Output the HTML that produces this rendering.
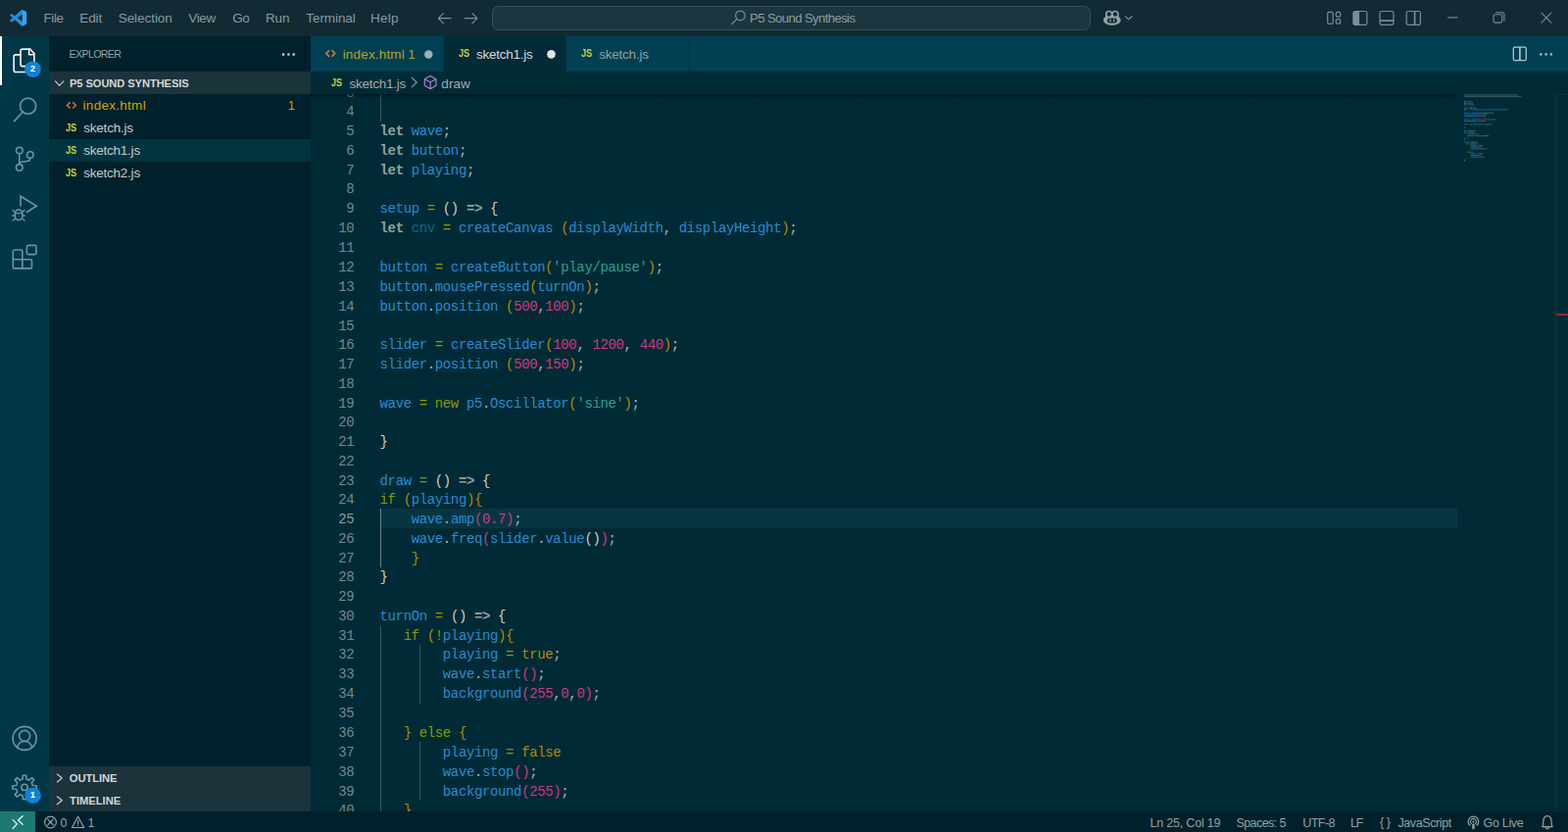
<!DOCTYPE html>
<html lang="en">
<head>
<meta charset="utf-8">
<title>sketch1.js - P5 Sound Synthesis - Visual Studio Code</title>
<style>
html,body{margin:0;padding:0;width:1600px;height:849px;overflow:hidden;background:#002b36;}
body{position:relative;font-family:"Liberation Sans", sans-serif;font-size:13.54px;}
.t{position:absolute;white-space:pre;line-height:20.0px;height:20.0px;}
.ov{position:absolute;left:0;top:0;overflow:visible;pointer-events:none;}
#titlebar{position:absolute;left:0;top:0;width:1600px;height:36.6px;background:#122a34;}
#cmd{position:absolute;left:502.2px;top:5.9px;width:610.8px;height:24.9px;box-sizing:border-box;border:1px solid #34505a;border-radius:6.5px;background:#1c353e;}
#activity{position:absolute;left:0;top:36.6px;width:50px;height:791.1px;background:#003847;}
#activity .sel{position:absolute;left:0;top:0;width:2.1px;height:50px;background:#fff;}
#sidebar{position:absolute;left:50px;top:36.6px;width:267.3px;height:791.1px;background:#00212b;}
.sech{position:absolute;left:0;width:267.3px;height:22.6px;background:#1b343c;}
.row{position:absolute;left:0;width:267.3px;height:22.95px;}
.row.on{background:#003441;}
#editor{position:absolute;left:317.3px;top:36.6px;width:1282.7px;height:791.1px;background:#002b36;}
#tabs{position:absolute;left:0;top:0;width:1282.7px;height:36.5px;background:#004052;}
.tab{position:absolute;top:0;height:36.5px;box-sizing:border-box;border-right:1px solid #003847;background:#004052;}
.tab.on{background:#002b37;}
#crumbs{position:absolute;left:0;top:36.5px;width:1282.7px;height:22.9px;background:#002b36;}
#code{position:absolute;left:0;top:59.4px;width:1282.7px;height:731.7px;overflow:hidden;background:#002b36;font-family:"Liberation Mono", monospace;font-size:14.0px;}
#code .shadow{position:absolute;left:0;top:0;width:1169.7px;height:5px;background:linear-gradient(rgba(0,0,0,.5),rgba(0,0,0,.16) 55%,rgba(0,0,0,0));}
.ln{position:absolute;left:0;width:43.9px;text-align:right;height:20px;line-height:20px;color:#74898f;white-space:pre;letter-spacing:-0.3714px;}
.ln.act{color:#8e9a9d;}
.cl{position:absolute;left:70.30px;height:20px;line-height:20px;white-space:pre;color:#aab6b8;letter-spacing:-0.3714px;}
.hl{position:absolute;left:70.7px;width:1099.1px;background:#073642;}
.ig{position:absolute;width:1px;background:#355760;}
.ig.iga{background:#5f8389;}
.mm{position:absolute;left:1169.7px;top:0;}
.ruler{position:absolute;left:1270.2px;top:0;width:12.5px;height:731.7px;border-left:1px solid #0a3642;border-top:1px solid #0a3642;box-sizing:border-box;}
.mark{position:absolute;left:1270.3px;width:12.4px;height:2.2px;background:#8e2a31;}
#status{position:absolute;left:0;top:827.7px;width:1600px;height:21.3px;background:#00212b;}
#remote{position:absolute;left:0;top:0;width:36.1px;height:21.3px;background:#1e7975;}
.k{color:#93a1a1;font-weight:bold;}
.v{color:#268bd2;}
.o{color:#859900;}
.s{color:#2aa198;}
.n{color:#d33682;}
.c{color:#b58900;}
.b1{color:#cdcdcd;}
.b2{color:#b58900;}
.b3{color:#d33682;}
.p{color:#aab6b8;}
.d{color:#1a6485;}
</style>
</head>
<body>
<header id="titlebar">
<div id="cmd"></div>
<svg class="ov" width="1600" height="36.6" viewBox="0 0 1600 36.6">
<g transform="translate(10.0 10.0) scale(0.1690 0.1660)"><path fill-rule="evenodd" d="M70.9119 99.3171C72.4869 99.9307 74.2828 99.8914 75.8725 99.1264L96.4608 89.2197C98.6242 88.1787 100 85.9892 100 83.5872V16.4133C100 14.0113 98.6243 11.8218 96.4609 10.7808L75.8725 0.873756C73.7862 -0.130129 71.3446 0.11576 69.5135 1.44695C69.252 1.63711 69.0028 1.84943 68.769 2.08341L29.3551 38.0415L12.1872 25.0096C10.589 23.7965 8.35363 23.8959 6.86933 25.2461L1.36303 30.2549C-0.452552 31.9064 -0.454633 34.7627 1.35853 36.417L16.2471 50.0001L1.35853 63.5832C-0.454633 65.2374 -0.452552 68.0938 1.36303 69.7453L6.86933 74.7541C8.35363 76.1043 10.589 76.2037 12.1872 74.9905L29.3551 61.9587L68.769 97.9167C69.3925 98.5406 70.1246 99.0104 70.9119 99.3171ZM75.0152 27.2989L45.1091 50.0001L75.0152 72.7012V27.2989Z" fill="#2090dc"/><path d="M75.9 0.9L96.5 10.8C98.6 11.8 100 14 100 16.4V83.6C100 86 98.6 88.2 96.5 89.2L75.9 99.1C74.3 99.9 72.5 99.9 70.9 99.3C73 99.6 75 98 75 95.6V4.4C75 2 73 0.4 70.9 0.7C72.5 0.1 74.3 0.1 75.9 0.9Z" fill="#2ca9f4"/></g>
<path d="M460.0 18.7H447.3M452.4 13.6L447.3 18.7L452.4 23.8" fill="none" stroke="#7b8e95" stroke-width="1.15" stroke-linecap="round" stroke-linejoin="round"/>
<path d="M474.2 18.7H486.9M481.8 13.6L486.9 18.7L481.8 23.8" fill="none" stroke="#7b8e95" stroke-width="1.15" stroke-linecap="round" stroke-linejoin="round"/>
<circle cx="755.4" cy="15.9" r="4.8" fill="none" stroke="#7b8e95" stroke-width="1.15"/><path d="M752.0 19.3L746.6 24.6" fill="none" stroke="#7b8e95" stroke-width="1.15" stroke-linecap="round" stroke-linejoin="round"/>
<path d="M1128.0 17.2C1126.8 17.9 1126.1 18.9 1126.1 20.1V21.5C1126.1 22.1 1126.4 22.6 1126.9 22.95C1129.0 24.75 1131.8 25.85 1134.85 25.85S1140.7 24.75 1142.8 22.95C1143.3 22.6 1143.6 22.1 1143.6 21.5V20.1C1143.6 18.9 1142.9 17.9 1141.7 17.2L1141 15.4H1128.7Z" fill="#93a3a8"/>
<rect x="1129.9" y="18.5" width="9.9" height="5.1" rx="2.3" fill="#122a34"/>
<circle cx="1131.7" cy="14.6" r="3.0" fill="#122a34" stroke="#93a3a8" stroke-width="1.55"/><circle cx="1138.0" cy="14.6" r="3.0" fill="#122a34" stroke="#93a3a8" stroke-width="1.55"/>
<rect x="1132.35" y="19.3" width="1.3" height="3.1" rx="0.6" fill="#93a3a8"/><rect x="1136.05" y="19.3" width="1.3" height="3.1" rx="0.6" fill="#93a3a8"/>
<path d="M1148.2 16.6L1151.75 19.7L1155.3 16.6" fill="none" stroke="#7b8e95" stroke-width="1.15" stroke-linecap="round" stroke-linejoin="round"/>
<rect x="1354.8" y="12.3" width="5.50" height="12.10" rx="1.5" fill="none" stroke="#7b8e95" stroke-width="1.2"/><rect x="1363.4" y="12.4" width="4.40" height="4.70" rx="1.4" fill="none" stroke="#7b8e95" stroke-width="1.2"/><rect x="1363.4" y="19.6" width="4.40" height="4.60" rx="1.4" fill="none" stroke="#7b8e95" stroke-width="1.2"/>
<rect x="1381.0" y="11.5" width="14.00" height="13.80" rx="2.0" fill="none" stroke="#7b8e95" stroke-width="1.2"/><path d="M1383 11.5H1387.2V25.3H1383C1381.9 25.3 1381 24.4 1381 23.3V13.5C1381 12.4 1381.9 11.5 1383 11.5Z" fill="#7b8e95"/>
<rect x="1408.1" y="11.5" width="14.00" height="13.80" rx="2.0" fill="none" stroke="#7b8e95" stroke-width="1.2"/><path d="M1408.1 21.1H1422.1" fill="none" stroke="#7b8e95" stroke-width="1.7" stroke-linecap="butt" stroke-linejoin="round"/>
<rect x="1435.3" y="11.5" width="14.20" height="13.80" rx="2.0" fill="none" stroke="#7b8e95" stroke-width="1.2"/><path d="M1443.7 11.5V25.3" fill="none" stroke="#7b8e95" stroke-width="1.7" stroke-linecap="butt" stroke-linejoin="round"/>
<rect x="1477.3" y="17.35" width="10.6" height="1.1" fill="#7b8e95"/>
<rect x="1524.1" y="14.7" width="8.80" height="8.40" rx="1.8" fill="none" stroke="#7b8e95" stroke-width="1.1"/><path d="M1526.6 12.7H1533.0C1534.2 12.7 1535.0 13.5 1535.0 14.7V20.9" fill="none" stroke="#7b8e95" stroke-width="1.1" stroke-linecap="round" stroke-linejoin="round"/>
<path d="M1573.1 13.1L1582.9 23.2M1582.9 13.1L1573.1 23.2" fill="none" stroke="#7b8e95" stroke-width="1.05" stroke-linecap="round" stroke-linejoin="round"/>
</svg>
<span class="t" style="left:44.50px;top:9.00px;font-size:13.54px;color:#869a9f;letter-spacing:-0.438px;">File</span>
<span class="t" style="left:81.30px;top:9.00px;font-size:13.54px;color:#869a9f;letter-spacing:-0.119px;">Edit</span>
<span class="t" style="left:120.70px;top:9.00px;font-size:13.54px;color:#869a9f;letter-spacing:-0.063px;">Selection</span>
<span class="t" style="left:192.22px;top:9.00px;font-size:13.54px;color:#869a9f;letter-spacing:-0.339px;">View</span>
<span class="t" style="left:237.24px;top:9.00px;font-size:13.54px;color:#869a9f;letter-spacing:-0.588px;">Go</span>
<span class="t" style="left:271.00px;top:9.00px;font-size:13.54px;color:#869a9f;letter-spacing:-0.150px;">Run</span>
<span class="t" style="left:312.32px;top:9.00px;font-size:13.54px;color:#869a9f;letter-spacing:-0.100px;">Terminal</span>
<span class="t" style="left:378.00px;top:9.00px;font-size:13.54px;color:#869a9f;letter-spacing:0.249px;">Help</span>
<span class="t" style="left:765.10px;top:9.00px;font-size:13.2px;color:#8b9ca1;letter-spacing:-0.640px;">P5 Sound Synthesis</span>
</header>
<nav id="activity">
<div class="sel"></div>
<svg class="ov" width="50" height="791.1" viewBox="0 36.6 50 791.1">
<path d="M23.0 49.7H30.7L34.9 54.2V65.2C34.9 66.3 34.0 67.2 32.9 67.2H23.0C21.9 67.2 21.0 66.3 21.0 65.2V51.7C21.0 50.6 21.9 49.7 23.0 49.7Z" fill="none" stroke="#f4f6f6" stroke-width="1.6" stroke-linecap="round" stroke-linejoin="round"/>
<path d="M29.6 50.0V55.4H34.6" fill="none" stroke="#f4f6f6" stroke-width="1.6" stroke-linecap="round" stroke-linejoin="round"/>
<path d="M20.8 55.5H16.1C15.0 55.5 14.1 56.4 14.1 57.5V71.1C14.1 72.2 15.0 73.1 16.1 73.1H26.5C27.6 73.1 28.3 72.4 28.3 71.3V67.6" fill="none" stroke="#f4f6f6" stroke-width="1.6" stroke-linecap="round" stroke-linejoin="round"/>
<circle cx="33.5" cy="70.3" r="8.3" fill="#0f82d6"/>
<circle cx="28.6" cy="107.8" r="8.1" fill="none" stroke="#6996a3" stroke-width="1.6"/><path d="M23.1 113.8L14.6 123.2" fill="none" stroke="#6996a3" stroke-width="1.6" stroke-linecap="round" stroke-linejoin="round"/>
<circle cx="19.8" cy="153.1" r="3.3" fill="none" stroke="#6996a3" stroke-width="1.6"/><circle cx="19.8" cy="170.5" r="3.3" fill="none" stroke="#6996a3" stroke-width="1.6"/><circle cx="30.8" cy="157.6" r="3.3" fill="none" stroke="#6996a3" stroke-width="1.6"/>
<path d="M19.8 156.4V167.2" fill="none" stroke="#6996a3" stroke-width="1.6" stroke-linecap="round" stroke-linejoin="round"/><path d="M30.8 160.9C30.8 163.4 29.0 164.4 26.0 164.4C23.0 164.4 19.8 164.6 19.8 167.2" fill="none" stroke="#6996a3" stroke-width="1.6" stroke-linecap="round" stroke-linejoin="round"/>
<path d="M21.0 210.2V199.9L37.3 209.9L26.9 216.4" fill="none" stroke="#6996a3" stroke-width="1.6" stroke-linecap="butt" stroke-linejoin="miter"/>
<ellipse cx="19.1" cy="218.8" rx="3.9" ry="5.3" fill="none" stroke="#6996a3" stroke-width="1.6"/>
<path d="M15.4 217.2H22.8M12.9 219.6H15.2M23.0 219.6H25.3M13.2 214.2L15.6 215.8M25.0 214.2L22.6 215.8M13.2 224.6L15.8 222.6M25.0 224.6L22.4 222.6" fill="none" stroke="#6996a3" stroke-width="1.35" stroke-linecap="round" stroke-linejoin="round"/>
<path d="M14.8 254.6H21.3C22.1 254.6 22.8 255.3 22.8 256.1V264.4H31.0C31.8 264.4 32.5 265.1 32.5 265.9V272.0C32.5 272.8 31.8 273.5 31.0 273.5H14.8C14.0 273.5 13.3 272.8 13.3 272.0V256.1C13.3 255.3 14.0 254.6 14.8 254.6Z" fill="none" stroke="#6996a3" stroke-width="1.6" stroke-linecap="round" stroke-linejoin="round"/>
<path d="M13.3 264.4H22.8V273.5" fill="none" stroke="#6996a3" stroke-width="1.6" stroke-linecap="round" stroke-linejoin="round"/>
<rect x="27.4" y="250.0" width="9.60" height="9.20" rx="1.6" fill="none" stroke="#6996a3" stroke-width="1.6"/>
<circle cx="25.1" cy="753.0" r="12.0" fill="none" stroke="#6996a3" stroke-width="1.6"/><circle cx="25.1" cy="750.5" r="5.5" fill="none" stroke="#6996a3" stroke-width="1.6"/>
<path d="M17.4 762.0C18.6 758.4 21.4 756.1 25.1 756.1S31.6 758.4 32.8 762.0" fill="none" stroke="#6996a3" stroke-width="1.6" stroke-linecap="round" stroke-linejoin="round"/>
<path d="M23.12 794.61L23.41 790.80L26.59 790.80L26.88 794.61L29.61 795.74L32.50 793.25L34.75 795.50L32.26 798.39L33.39 801.12L37.20 801.41L37.20 804.59L33.39 804.88L32.26 807.61L34.75 810.50L32.50 812.75L29.61 810.26L26.88 811.39L26.59 815.20L23.41 815.20L23.12 811.39L20.39 810.26L17.50 812.75L15.25 810.50L17.74 807.61L16.61 804.88L12.80 804.59L12.80 801.41L16.61 801.12L17.74 798.39L15.25 795.50L17.50 793.25L20.39 795.74Z" fill="none" stroke="#6996a3" stroke-width="1.6" stroke-linecap="round" stroke-linejoin="round"/><circle cx="25.0" cy="803.0" r="3.1" fill="none" stroke="#6996a3" stroke-width="1.6"/>
<circle cx="33.5" cy="811.3" r="8.3" fill="#0f82d6"/>
</svg>
<span class="t" style="left:30.79px;top:23.40px;font-size:9.4px;color:#ffffff;font-weight:bold;">2</span>
<span class="t" style="left:30.70px;top:764.40px;font-size:9.4px;color:#ffffff;font-weight:bold;">1</span>
</nav>
<aside id="sidebar">
<div class="sech" style="top:36.8px"></div>
<div class="row on" style="top:105.3px"></div>
<div class="sech" style="top:745.5px;height:22.8px"></div>
<div class="sech" style="top:768.3px;height:22.8px"></div>
<svg class="ov" width="267.3" height="791.1" viewBox="50 36.6 267.3 791.1">
<rect x="288.00" y="53.95" width="2.3" height="2.3" rx="0.5" fill="#c5cccc"/><rect x="293.25" y="53.95" width="2.3" height="2.3" rx="0.5" fill="#c5cccc"/><rect x="298.50" y="53.95" width="2.3" height="2.3" rx="0.5" fill="#c5cccc"/>
<path d="M56.5 82.4L60.70 87.0L64.9 82.4" fill="none" stroke="#c5cccc" stroke-width="1.15" stroke-linecap="round" stroke-linejoin="round"/>
<path d="M58.3 789.6L63.3 793.60L58.3 797.6" fill="none" stroke="#c5cccc" stroke-width="1.15" stroke-linecap="round" stroke-linejoin="round"/>
<path d="M58.3 812.4L63.3 816.40L58.3 820.4" fill="none" stroke="#c5cccc" stroke-width="1.15" stroke-linecap="round" stroke-linejoin="round"/>
<path d="M71.60 104.00L68.40 107.05L71.60 110.10M74.20 104.00L77.40 107.05L74.20 110.10" fill="none" stroke="#d26f38" stroke-width="1.55" stroke-linecap="butt" stroke-linejoin="miter"/>
</svg>
<span class="t" style="left:20.60px;top:8.40px;font-size:10.7px;color:#93a1a1;letter-spacing:-0.697px;">EXPLORER</span>
<span class="t" style="left:21.00px;top:38.40px;font-size:11.2px;color:#d3d7d7;letter-spacing:-0.114px;font-weight:bold;">P5 SOUND SYNTHESIS</span>
<span class="t" style="left:34.60px;top:61.40px;font-size:13.54px;color:#cca700;letter-spacing:0.267px;">index.html</span>
<span class="t" style="left:244.05px;top:61.40px;font-size:12.2px;color:#cca700;">1</span>
<span class="t" style="left:35.15px;top:84.40px;font-size:13.54px;color:#c4cccc;letter-spacing:-0.206px;">sketch.js</span>
<span class="t" style="left:35.15px;top:107.40px;font-size:13.54px;color:#c4cccc;letter-spacing:-0.239px;">sketch1.js</span>
<span class="t" style="left:35.15px;top:130.40px;font-size:13.54px;color:#c4cccc;letter-spacing:-0.239px;">sketch2.js</span>
<span class="t" style="left:20.81px;top:747.40px;font-size:11.2px;color:#d3d7d7;letter-spacing:-0.069px;font-weight:bold;">OUTLINE</span>
<span class="t" style="left:21.10px;top:770.40px;font-size:11.2px;color:#d3d7d7;letter-spacing:-0.014px;font-weight:bold;">TIMELINE</span>
<span class="t" style="left:17.35px;top:84.40px;font-size:10.1px;color:#cbcb41;transform:scaleX(0.904);transform-origin:0 0;font-weight:bold;">JS</span>
<span class="t" style="left:17.35px;top:107.40px;font-size:10.1px;color:#cbcb41;transform:scaleX(0.904);transform-origin:0 0;font-weight:bold;">JS</span>
<span class="t" style="left:17.35px;top:130.40px;font-size:10.1px;color:#cbcb41;transform:scaleX(0.904);transform-origin:0 0;font-weight:bold;">JS</span>
</aside>
<main id="editor">
<div id="tabs">
<div class="tab" style="left:0;width:135.5px"></div><div class="tab on" style="left:135.5px;width:124.8px"></div><div class="tab" style="left:260.3px;width:125.3px"></div>
<svg class="ov" width="1282.7" height="36.5" viewBox="317.3 36.6 1282.7 36.5">
<path d="M336.30 50.80L333.20 54.15L336.30 57.50M338.90 50.80L342.00 54.15L338.90 57.50" fill="none" stroke="#cf7a48" stroke-width="1.55" stroke-linecap="butt" stroke-linejoin="miter"/>
<circle cx="437.6" cy="55.0" r="4.25" fill="#9fb0b3"/><circle cx="562.8" cy="55.0" r="4.3" fill="#dfe6e8"/>
<rect x="1544.6" y="47.8" width="13.00" height="13.50" rx="1.6" fill="none" stroke="#b4c8ce" stroke-width="1.25"/><path d="M1551.2 47.8V61.3" fill="none" stroke="#b4c8ce" stroke-width="1.6" stroke-linecap="butt" stroke-linejoin="round"/>
<rect x="1571.50" y="53.80" width="2.3" height="2.3" rx="0.5" fill="#b4c8ce"/><rect x="1576.75" y="53.80" width="2.3" height="2.3" rx="0.5" fill="#b4c8ce"/><rect x="1582.00" y="53.80" width="2.3" height="2.3" rx="0.5" fill="#b4c8ce"/>
</svg>
<span class="t" style="left:32.40px;top:9.40px;font-size:13.54px;color:#b3a22b;letter-spacing:0.156px;">index.html</span>
<span class="t" style="left:98.95px;top:9.40px;font-size:13.54px;color:#b3a22b;">1</span>
<span class="t" style="left:168.75px;top:9.40px;font-size:13.54px;color:#d6dbdb;letter-spacing:-0.283px;">sketch1.js</span>
<span class="t" style="left:293.95px;top:9.40px;font-size:13.54px;color:#93a1a1;letter-spacing:-0.244px;">sketch.js</span>
<span class="t" style="left:150.75px;top:8.40px;font-size:10.1px;color:#cbcb41;transform:scaleX(0.904);transform-origin:0 0;font-weight:bold;">JS</span>
<span class="t" style="left:275.55px;top:8.40px;font-size:10.1px;color:#cbcb41;transform:scaleX(0.904);transform-origin:0 0;font-weight:bold;">JS</span>
</div>
<div id="crumbs">
<svg class="ov" width="1282.7" height="22.9" viewBox="317.3 73.1 1282.7 22.9">
<path d="M420.4 79.5L425.3 84.10L420.4 88.7" fill="none" stroke="#8d9da1" stroke-width="1.15" stroke-linecap="round" stroke-linejoin="round"/>
<path d="M439.2 77.5L445.1 80.8V87.4L439.2 90.8L433.4 87.4V80.8ZM433.6 81.0L439.2 83.9L444.9 81.0M439.2 83.9V90.6" fill="none" stroke="#b180d7" stroke-width="1.15" stroke-linecap="round" stroke-linejoin="round"/>
</svg>
<span class="t" style="left:39.15px;top:2.90px;font-size:13.54px;color:#a3acae;letter-spacing:-0.261px;">sketch1.js</span>
<span class="t" style="left:133.00px;top:2.90px;font-size:13.54px;color:#a3acae;letter-spacing:0.082px;">draw</span>
<span class="t" style="left:21.15px;top:1.90px;font-size:10.1px;color:#cbcb41;transform:scaleX(0.888);transform-origin:0 0;font-weight:bold;">JS</span>
</div>
<div id="code">
<div class="hl" style="top:423.42px;height:20.00px"></div>
<div class="ig" style="left:70.70px;top:-11.58px;height:39.17px"></div>
<div class="ig iga" style="left:70.70px;top:423.42px;height:59.17px"></div>
<div class="ig" style="left:70.70px;top:542.58px;height:217.50px"></div>
<div class="ig" style="left:110.85px;top:561.75px;height:60.00px"></div>
<div class="ig" style="left:110.85px;top:660.92px;height:59.17px"></div>
<div class="ln" style="top:-11.00px">3</div>
<div class="ln" style="top:8.00px">4</div>
<div class="ln" style="top:28.00px">5</div>
<div class="cl" style="top:28.00px"><span class="k">let</span> <span class="v">wave</span><span class="p">;</span></div>
<div class="ln" style="top:48.00px">6</div>
<div class="cl" style="top:48.00px"><span class="k">let</span> <span class="v">button</span><span class="p">;</span></div>
<div class="ln" style="top:68.00px">7</div>
<div class="cl" style="top:68.00px"><span class="k">let</span> <span class="v">playing</span><span class="p">;</span></div>
<div class="ln" style="top:87.00px">8</div>
<div class="ln" style="top:107.00px">9</div>
<div class="cl" style="top:107.00px"><span class="v">setup</span> <span class="o">=</span> <span class="b1">()</span> <span class="k">=&gt;</span> <span class="b1">{</span></div>
<div class="ln" style="top:127.00px">10</div>
<div class="cl" style="top:127.00px"><span class="k">let</span> <span class="d">cnv</span> <span class="o">=</span> <span class="v">createCanvas</span> <span class="b2">(</span><span class="v">displayWidth</span><span class="p">,</span> <span class="v">displayHeight</span><span class="b2">)</span><span class="p">;</span></div>
<div class="ln" style="top:147.00px">11</div>
<div class="ln" style="top:167.00px">12</div>
<div class="cl" style="top:167.00px"><span class="v">button</span> <span class="o">=</span> <span class="v">createButton</span><span class="b2">(</span><span class="s">&#x27;play/pause&#x27;</span><span class="b2">)</span><span class="p">;</span></div>
<div class="ln" style="top:187.00px">13</div>
<div class="cl" style="top:187.00px"><span class="v">button</span><span class="p">.</span><span class="v">mousePressed</span><span class="b2">(</span><span class="v">turnOn</span><span class="b2">)</span><span class="p">;</span></div>
<div class="ln" style="top:207.00px">14</div>
<div class="cl" style="top:207.00px"><span class="v">button</span><span class="p">.</span><span class="v">position</span> <span class="b2">(</span><span class="n">500</span><span class="p">,</span><span class="n">100</span><span class="b2">)</span><span class="p">;</span></div>
<div class="ln" style="top:227.00px">15</div>
<div class="ln" style="top:246.00px">16</div>
<div class="cl" style="top:246.00px"><span class="v">slider</span> <span class="o">=</span> <span class="v">createSlider</span><span class="b2">(</span><span class="n">100</span><span class="p">,</span> <span class="n">1200</span><span class="p">,</span> <span class="n">440</span><span class="b2">)</span><span class="p">;</span></div>
<div class="ln" style="top:266.00px">17</div>
<div class="cl" style="top:266.00px"><span class="v">slider</span><span class="p">.</span><span class="v">position</span> <span class="b2">(</span><span class="n">500</span><span class="p">,</span><span class="n">150</span><span class="b2">)</span><span class="p">;</span></div>
<div class="ln" style="top:286.00px">18</div>
<div class="ln" style="top:306.00px">19</div>
<div class="cl" style="top:306.00px"><span class="v">wave</span> <span class="o">=</span> <span class="o">new</span> <span class="v">p5</span><span class="p">.</span><span class="v">Oscillator</span><span class="b2">(</span><span class="s">&#x27;sine&#x27;</span><span class="b2">)</span><span class="p">;</span></div>
<div class="ln" style="top:325.00px">20</div>
<div class="ln" style="top:345.00px">21</div>
<div class="cl" style="top:345.00px"><span class="b1">}</span></div>
<div class="ln" style="top:365.00px">22</div>
<div class="ln" style="top:385.00px">23</div>
<div class="cl" style="top:385.00px"><span class="v">draw</span> <span class="o">=</span> <span class="b1">()</span> <span class="k">=&gt;</span> <span class="b1">{</span></div>
<div class="ln" style="top:404.00px">24</div>
<div class="cl" style="top:404.00px"><span class="o">if</span> <span class="b2">(</span><span class="v">playing</span><span class="b2">)</span><span class="b2">{</span></div>
<div class="ln act" style="top:424.00px">25</div>
<div class="cl" style="top:424.00px">    <span class="v">wave</span><span class="p">.</span><span class="v">amp</span><span class="b3">(</span><span class="n">0.7</span><span class="b3">)</span><span class="p">;</span></div>
<div class="ln" style="top:444.00px">26</div>
<div class="cl" style="top:444.00px">    <span class="v">wave</span><span class="p">.</span><span class="v">freq</span><span class="b3">(</span><span class="v">slider</span><span class="p">.</span><span class="v">value</span><span class="b1">()</span><span class="b3">)</span><span class="p">;</span></div>
<div class="ln" style="top:464.00px">27</div>
<div class="cl" style="top:464.00px">    <span class="b2">}</span></div>
<div class="ln" style="top:483.00px">28</div>
<div class="cl" style="top:483.00px"><span class="b1">}</span></div>
<div class="ln" style="top:503.00px">29</div>
<div class="ln" style="top:523.00px">30</div>
<div class="cl" style="top:523.00px"><span class="v">turnOn</span> <span class="o">=</span> <span class="b1">()</span> <span class="k">=&gt;</span> <span class="b1">{</span></div>
<div class="ln" style="top:543.00px">31</div>
<div class="cl" style="top:543.00px">   <span class="o">if</span> <span class="b2">(</span><span class="o">!</span><span class="v">playing</span><span class="b2">)</span><span class="b2">{</span></div>
<div class="ln" style="top:562.00px">32</div>
<div class="cl" style="top:562.00px">        <span class="v">playing</span> <span class="o">=</span> <span class="c">true</span><span class="p">;</span></div>
<div class="ln" style="top:582.00px">33</div>
<div class="cl" style="top:582.00px">        <span class="v">wave</span><span class="p">.</span><span class="v">start</span><span class="b3">()</span><span class="p">;</span></div>
<div class="ln" style="top:602.00px">34</div>
<div class="cl" style="top:602.00px">        <span class="v">background</span><span class="b3">(</span><span class="n">255</span><span class="p">,</span><span class="n">0</span><span class="p">,</span><span class="n">0</span><span class="b3">)</span><span class="p">;</span></div>
<div class="ln" style="top:622.00px">35</div>
<div class="ln" style="top:642.00px">36</div>
<div class="cl" style="top:642.00px">   <span class="b2">}</span> <span class="o">else</span> <span class="b2">{</span></div>
<div class="ln" style="top:662.00px">37</div>
<div class="cl" style="top:662.00px">        <span class="v">playing</span> <span class="o">=</span> <span class="c">false</span></div>
<div class="ln" style="top:682.00px">38</div>
<div class="cl" style="top:682.00px">        <span class="v">wave</span><span class="p">.</span><span class="v">stop</span><span class="b3">()</span><span class="p">;</span></div>
<div class="ln" style="top:702.00px">39</div>
<div class="cl" style="top:702.00px">        <span class="v">background</span><span class="b3">(</span><span class="n">255</span><span class="b3">)</span><span class="p">;</span></div>
<div class="ln" style="top:721.00px">40</div>
<div class="cl" style="top:721.00px">   <span class="b2">}</span></div>
<svg class="mm" width="100" height="100" viewBox="0 0 100 100"><rect x="7.00" y="0.30" width="55.00" height="1.2" fill="#315259"/><rect x="7.00" y="1.97" width="58.33" height="1.2" fill="#315259"/><rect x="7.00" y="6.97" width="2.50" height="1.2" fill="#4a666c"/><rect x="10.33" y="6.97" width="3.33" height="1.2" fill="#135b84"/><rect x="13.67" y="6.97" width="0.83" height="1.2" fill="#557077"/><rect x="7.00" y="8.63" width="2.50" height="1.2" fill="#4a666c"/><rect x="10.33" y="8.63" width="5.00" height="1.2" fill="#135b84"/><rect x="15.33" y="8.63" width="0.83" height="1.2" fill="#557077"/><rect x="7.00" y="10.30" width="2.50" height="1.2" fill="#4a666c"/><rect x="10.33" y="10.30" width="5.83" height="1.2" fill="#135b84"/><rect x="16.17" y="10.30" width="0.83" height="1.2" fill="#557077"/><rect x="7.00" y="13.63" width="4.17" height="1.2" fill="#135b84"/><rect x="12.00" y="13.63" width="0.83" height="1.2" fill="#42621b"/><rect x="13.67" y="13.63" width="1.67" height="1.2" fill="#667c82"/><rect x="16.17" y="13.63" width="1.67" height="1.2" fill="#4a666c"/><rect x="18.67" y="13.63" width="0.83" height="1.2" fill="#667c82"/><rect x="7.00" y="15.30" width="2.50" height="1.2" fill="#4a666c"/><rect x="10.33" y="15.30" width="2.50" height="1.2" fill="#0d485e"/><rect x="13.67" y="15.30" width="0.83" height="1.2" fill="#42621b"/><rect x="15.33" y="15.30" width="10.00" height="1.2" fill="#135b84"/><rect x="26.17" y="15.30" width="0.83" height="1.2" fill="#5a5a1b"/><rect x="27.00" y="15.30" width="10.00" height="1.2" fill="#135b84"/><rect x="37.00" y="15.30" width="0.83" height="1.2" fill="#557077"/><rect x="38.67" y="15.30" width="10.83" height="1.2" fill="#135b84"/><rect x="49.50" y="15.30" width="0.83" height="1.2" fill="#5a5a1b"/><rect x="50.33" y="15.30" width="0.83" height="1.2" fill="#557077"/><rect x="7.00" y="18.63" width="5.00" height="1.2" fill="#135b84"/><rect x="12.83" y="18.63" width="0.83" height="1.2" fill="#42621b"/><rect x="14.50" y="18.63" width="10.00" height="1.2" fill="#135b84"/><rect x="24.50" y="18.63" width="0.83" height="1.2" fill="#5a5a1b"/><rect x="25.33" y="18.63" width="10.00" height="1.2" fill="#156667"/><rect x="35.33" y="18.63" width="0.83" height="1.2" fill="#5a5a1b"/><rect x="36.17" y="18.63" width="0.83" height="1.2" fill="#557077"/><rect x="7.00" y="20.30" width="5.00" height="1.2" fill="#135b84"/><rect x="12.00" y="20.30" width="0.83" height="1.2" fill="#557077"/><rect x="12.83" y="20.30" width="10.00" height="1.2" fill="#135b84"/><rect x="22.83" y="20.30" width="0.83" height="1.2" fill="#5a5a1b"/><rect x="23.67" y="20.30" width="5.00" height="1.2" fill="#135b84"/><rect x="28.67" y="20.30" width="0.83" height="1.2" fill="#5a5a1b"/><rect x="29.50" y="20.30" width="0.83" height="1.2" fill="#557077"/><rect x="7.00" y="21.97" width="5.00" height="1.2" fill="#135b84"/><rect x="12.00" y="21.97" width="0.83" height="1.2" fill="#557077"/><rect x="12.83" y="21.97" width="6.67" height="1.2" fill="#135b84"/><rect x="20.33" y="21.97" width="0.83" height="1.2" fill="#5a5a1b"/><rect x="21.17" y="21.97" width="2.50" height="1.2" fill="#6a305c"/><rect x="23.67" y="21.97" width="0.83" height="1.2" fill="#557077"/><rect x="24.50" y="21.97" width="2.50" height="1.2" fill="#6a305c"/><rect x="27.00" y="21.97" width="0.83" height="1.2" fill="#5a5a1b"/><rect x="27.83" y="21.97" width="0.83" height="1.2" fill="#557077"/><rect x="7.00" y="25.30" width="5.00" height="1.2" fill="#135b84"/><rect x="12.83" y="25.30" width="0.83" height="1.2" fill="#42621b"/><rect x="14.50" y="25.30" width="10.00" height="1.2" fill="#135b84"/><rect x="24.50" y="25.30" width="0.83" height="1.2" fill="#5a5a1b"/><rect x="25.33" y="25.30" width="2.50" height="1.2" fill="#6a305c"/><rect x="27.83" y="25.30" width="0.83" height="1.2" fill="#557077"/><rect x="29.50" y="25.30" width="3.33" height="1.2" fill="#6a305c"/><rect x="32.83" y="25.30" width="0.83" height="1.2" fill="#557077"/><rect x="34.50" y="25.30" width="2.50" height="1.2" fill="#6a305c"/><rect x="37.00" y="25.30" width="0.83" height="1.2" fill="#5a5a1b"/><rect x="37.83" y="25.30" width="0.83" height="1.2" fill="#557077"/><rect x="7.00" y="26.97" width="5.00" height="1.2" fill="#135b84"/><rect x="12.00" y="26.97" width="0.83" height="1.2" fill="#557077"/><rect x="12.83" y="26.97" width="6.67" height="1.2" fill="#135b84"/><rect x="20.33" y="26.97" width="0.83" height="1.2" fill="#5a5a1b"/><rect x="21.17" y="26.97" width="2.50" height="1.2" fill="#6a305c"/><rect x="23.67" y="26.97" width="0.83" height="1.2" fill="#557077"/><rect x="24.50" y="26.97" width="2.50" height="1.2" fill="#6a305c"/><rect x="27.00" y="26.97" width="0.83" height="1.2" fill="#5a5a1b"/><rect x="27.83" y="26.97" width="0.83" height="1.2" fill="#557077"/><rect x="7.00" y="30.30" width="3.33" height="1.2" fill="#135b84"/><rect x="11.17" y="30.30" width="0.83" height="1.2" fill="#42621b"/><rect x="12.83" y="30.30" width="2.50" height="1.2" fill="#42621b"/><rect x="16.17" y="30.30" width="1.67" height="1.2" fill="#135b84"/><rect x="17.83" y="30.30" width="0.83" height="1.2" fill="#557077"/><rect x="18.67" y="30.30" width="8.33" height="1.2" fill="#135b84"/><rect x="27.00" y="30.30" width="0.83" height="1.2" fill="#5a5a1b"/><rect x="27.83" y="30.30" width="5.00" height="1.2" fill="#156667"/><rect x="32.83" y="30.30" width="0.83" height="1.2" fill="#5a5a1b"/><rect x="33.67" y="30.30" width="0.83" height="1.2" fill="#557077"/><rect x="7.00" y="33.63" width="0.83" height="1.2" fill="#667c82"/><rect x="7.00" y="36.97" width="3.33" height="1.2" fill="#135b84"/><rect x="11.17" y="36.97" width="0.83" height="1.2" fill="#42621b"/><rect x="12.83" y="36.97" width="1.67" height="1.2" fill="#667c82"/><rect x="15.33" y="36.97" width="1.67" height="1.2" fill="#4a666c"/><rect x="17.83" y="36.97" width="0.83" height="1.2" fill="#667c82"/><rect x="7.00" y="38.63" width="1.67" height="1.2" fill="#42621b"/><rect x="9.50" y="38.63" width="0.83" height="1.2" fill="#5a5a1b"/><rect x="10.33" y="38.63" width="5.83" height="1.2" fill="#135b84"/><rect x="16.17" y="38.63" width="0.83" height="1.2" fill="#5a5a1b"/><rect x="17.00" y="38.63" width="0.83" height="1.2" fill="#5a5a1b"/><rect x="10.33" y="40.30" width="3.33" height="1.2" fill="#135b84"/><rect x="13.67" y="40.30" width="0.83" height="1.2" fill="#557077"/><rect x="14.50" y="40.30" width="2.50" height="1.2" fill="#135b84"/><rect x="17.00" y="40.30" width="0.83" height="1.2" fill="#6a305c"/><rect x="17.83" y="40.30" width="2.50" height="1.2" fill="#6a305c"/><rect x="20.33" y="40.30" width="0.83" height="1.2" fill="#6a305c"/><rect x="21.17" y="40.30" width="0.83" height="1.2" fill="#557077"/><rect x="10.33" y="41.97" width="3.33" height="1.2" fill="#135b84"/><rect x="13.67" y="41.97" width="0.83" height="1.2" fill="#557077"/><rect x="14.50" y="41.97" width="3.33" height="1.2" fill="#135b84"/><rect x="17.83" y="41.97" width="0.83" height="1.2" fill="#6a305c"/><rect x="18.67" y="41.97" width="5.00" height="1.2" fill="#135b84"/><rect x="23.67" y="41.97" width="0.83" height="1.2" fill="#557077"/><rect x="24.50" y="41.97" width="4.17" height="1.2" fill="#135b84"/><rect x="28.67" y="41.97" width="1.67" height="1.2" fill="#667c82"/><rect x="30.33" y="41.97" width="0.83" height="1.2" fill="#6a305c"/><rect x="31.17" y="41.97" width="0.83" height="1.2" fill="#557077"/><rect x="10.33" y="43.63" width="0.83" height="1.2" fill="#5a5a1b"/><rect x="7.00" y="45.30" width="0.83" height="1.2" fill="#667c82"/><rect x="7.00" y="48.63" width="5.00" height="1.2" fill="#135b84"/><rect x="12.83" y="48.63" width="0.83" height="1.2" fill="#42621b"/><rect x="14.50" y="48.63" width="1.67" height="1.2" fill="#667c82"/><rect x="17.00" y="48.63" width="1.67" height="1.2" fill="#4a666c"/><rect x="19.50" y="48.63" width="0.83" height="1.2" fill="#667c82"/><rect x="9.50" y="50.30" width="1.67" height="1.2" fill="#42621b"/><rect x="12.00" y="50.30" width="0.83" height="1.2" fill="#5a5a1b"/><rect x="12.83" y="50.30" width="0.83" height="1.2" fill="#42621b"/><rect x="13.67" y="50.30" width="5.83" height="1.2" fill="#135b84"/><rect x="19.50" y="50.30" width="0.83" height="1.2" fill="#5a5a1b"/><rect x="20.33" y="50.30" width="0.83" height="1.2" fill="#5a5a1b"/><rect x="13.67" y="51.97" width="5.83" height="1.2" fill="#135b84"/><rect x="20.33" y="51.97" width="0.83" height="1.2" fill="#42621b"/><rect x="22.00" y="51.97" width="3.33" height="1.2" fill="#5a5a1b"/><rect x="25.33" y="51.97" width="0.83" height="1.2" fill="#557077"/><rect x="13.67" y="53.63" width="3.33" height="1.2" fill="#135b84"/><rect x="17.00" y="53.63" width="0.83" height="1.2" fill="#557077"/><rect x="17.83" y="53.63" width="4.17" height="1.2" fill="#135b84"/><rect x="22.00" y="53.63" width="1.67" height="1.2" fill="#6a305c"/><rect x="23.67" y="53.63" width="0.83" height="1.2" fill="#557077"/><rect x="13.67" y="55.30" width="8.33" height="1.2" fill="#135b84"/><rect x="22.00" y="55.30" width="0.83" height="1.2" fill="#6a305c"/><rect x="22.83" y="55.30" width="2.50" height="1.2" fill="#6a305c"/><rect x="25.33" y="55.30" width="0.83" height="1.2" fill="#557077"/><rect x="26.17" y="55.30" width="0.83" height="1.2" fill="#6a305c"/><rect x="27.00" y="55.30" width="0.83" height="1.2" fill="#557077"/><rect x="27.83" y="55.30" width="0.83" height="1.2" fill="#6a305c"/><rect x="28.67" y="55.30" width="0.83" height="1.2" fill="#6a305c"/><rect x="29.50" y="55.30" width="0.83" height="1.2" fill="#557077"/><rect x="9.50" y="58.63" width="0.83" height="1.2" fill="#5a5a1b"/><rect x="11.17" y="58.63" width="3.33" height="1.2" fill="#42621b"/><rect x="15.33" y="58.63" width="0.83" height="1.2" fill="#5a5a1b"/><rect x="13.67" y="60.30" width="5.83" height="1.2" fill="#135b84"/><rect x="20.33" y="60.30" width="0.83" height="1.2" fill="#42621b"/><rect x="22.00" y="60.30" width="4.17" height="1.2" fill="#5a5a1b"/><rect x="13.67" y="61.97" width="3.33" height="1.2" fill="#135b84"/><rect x="17.00" y="61.97" width="0.83" height="1.2" fill="#557077"/><rect x="17.83" y="61.97" width="3.33" height="1.2" fill="#135b84"/><rect x="21.17" y="61.97" width="1.67" height="1.2" fill="#6a305c"/><rect x="22.83" y="61.97" width="0.83" height="1.2" fill="#557077"/><rect x="13.67" y="63.63" width="8.33" height="1.2" fill="#135b84"/><rect x="22.00" y="63.63" width="0.83" height="1.2" fill="#6a305c"/><rect x="22.83" y="63.63" width="2.50" height="1.2" fill="#6a305c"/><rect x="25.33" y="63.63" width="0.83" height="1.2" fill="#6a305c"/><rect x="26.17" y="63.63" width="0.83" height="1.2" fill="#557077"/><rect x="9.50" y="65.30" width="0.83" height="1.2" fill="#5a5a1b"/><rect x="7.00" y="66.97" width="0.83" height="1.2" fill="#667c82"/></svg>
<div class="ruler"></div><div class="mark" style="top:224.0px"></div>
<div class="shadow"></div>
</div>
</main>
<footer id="status">
<div id="remote"></div>
<svg class="ov" width="1600" height="21.3" viewBox="0 827.7 1600 21.3">
<path d="M13.1 836.3L17.2 840.6L13.1 844.9M23.0 832.5L18.4 836.7L23.0 840.9" fill="none" stroke="#e8f5f3" stroke-width="1.3" stroke-linecap="round" stroke-linejoin="round"/>
<circle cx="51.4" cy="838.7" r="5.9" fill="none" stroke="#93a1a1" stroke-width="1.2"/><path d="M48.6 835.9L54.2 841.5M54.2 835.9L48.6 841.5" fill="none" stroke="#93a1a1" stroke-width="1.2" stroke-linecap="round" stroke-linejoin="round"/>
<path d="M79.5 833.0L85.6 844.2H73.4Z" fill="none" stroke="#93a1a1" stroke-width="1.2" stroke-linecap="round" stroke-linejoin="round"/><path d="M79.5 837.0V840.6" fill="none" stroke="#93a1a1" stroke-width="1.2" stroke-linecap="round" stroke-linejoin="round"/><circle cx="79.5" cy="842.3" r="0.65" fill="#93a1a1"/>
<path d="M1499.9 841.9A5.3 5.3 0 1 1 1507.2 841.9" fill="none" stroke="#93a1a1" stroke-width="1.25" stroke-linecap="round" stroke-linejoin="round"/>
<path d="M1501.5 840.3A3.0 3.0 0 1 1 1505.6 840.3" fill="none" stroke="#93a1a1" stroke-width="1.15" stroke-linecap="round" stroke-linejoin="round"/>
<circle cx="1503.55" cy="838.2" r="1.05" fill="#93a1a1"/><rect x="1502.3" y="840.1" width="2.5" height="5.8" rx="1.1" fill="#93a1a1"/>
<path d="M1573.8 843.3C1574.8 842.2 1574.9 841.0 1574.9 838.6C1574.9 834.9 1576.5 832.4 1579.05 832.4S1583.2 834.9 1583.2 838.6C1583.2 841.0 1583.3 842.2 1584.3 843.3Z" fill="none" stroke="#93a1a1" stroke-width="1.25" stroke-linecap="round" stroke-linejoin="round"/>
<path d="M1577.5 844.0C1577.8 845.9 1580.3 845.9 1580.6 844.0" fill="none" stroke="#93a1a1" stroke-width="1.25" stroke-linecap="round" stroke-linejoin="round"/>
</svg>
<span class="t" style="left:61.45px;top:2.30px;font-size:12.5px;color:#93a1a1;">0</span>
<span class="t" style="left:89.57px;top:2.30px;font-size:12.5px;color:#93a1a1;">1</span>
<span class="t" style="left:1173.40px;top:2.30px;font-size:12.5px;color:#93a1a1;letter-spacing:-0.183px;">Ln 25, Col 19</span>
<span class="t" style="left:1261.40px;top:2.30px;font-size:12.5px;color:#93a1a1;letter-spacing:-0.560px;">Spaces: 5</span>
<span class="t" style="left:1329.20px;top:2.30px;font-size:12.5px;color:#93a1a1;letter-spacing:-0.525px;">UTF-8</span>
<span class="t" style="left:1378.00px;top:2.30px;font-size:12.5px;color:#93a1a1;letter-spacing:-1.200px;">LF</span>
<span class="t" style="left:1407.90px;top:1.30px;font-size:12.5px;color:#93a1a1;letter-spacing:2.805px;">{}</span>
<span class="t" style="left:1426.45px;top:2.30px;font-size:12.5px;color:#93a1a1;letter-spacing:-0.392px;">JavaScript</span>
<span class="t" style="left:1513.61px;top:2.30px;font-size:12.5px;color:#93a1a1;letter-spacing:-0.326px;">Go Live</span>
</footer>
</body>
</html>
